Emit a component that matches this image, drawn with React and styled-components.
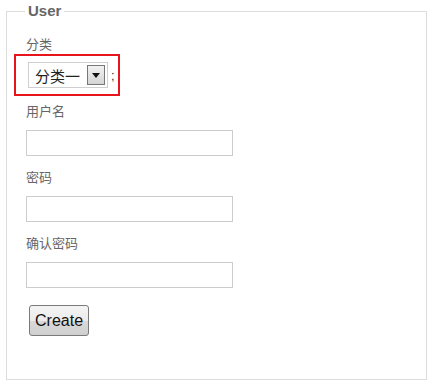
import styled, { createGlobalStyle } from 'styled-components';

const GlobalStyle = createGlobalStyle`
    body {
        margin: 0;
        background: #fff;
        font-family: "Liberation Sans", "Noto Sans CJK SC", sans-serif;
    }
`;

const Page = styled.div`
    padding: 0 0 0 6px;
`;

const Fieldset = styled.fieldset`
    box-sizing: border-box;
    width: 421px;
    height: 380px;
    margin: 0;
    padding: 12px 19px 0 19px;
    border: 1px solid #dcdcdc;
    min-width: 0;
`;

const Legend = styled.legend`
    padding: 0 3px;
    margin-left: -1px;
    font-family: "Liberation Sans", sans-serif;
    font-weight: bold;
    font-size: 15px;
    line-height: 22px;
    color: #666;
`;

const Label = styled.div`
    font-family: "Noto Sans CJK SC", sans-serif;
    font-size: 13px;
    line-height: 20px;
    color: #666;
    margin-bottom: ${p => (p.$tight ? '0' : '9px')};
`;

const Highlight = styled.div`
    box-sizing: border-box;
    width: 106px;
    height: 42px;
    margin-left: -12px;
    border: 2px solid #e8141c;
    display: flex;
    align-items: center;
    padding-left: 12px;
    margin-bottom: 5px;
`;

const Select = styled.div`
    box-sizing: border-box;
    height: 26px;
    width: 80px;
    border: 1px solid #cfcfcf;
    display: flex;
    align-items: center;
    justify-content: space-between;
    padding: 0 2px 0 6px;
    font-family: "Noto Sans CJK SC", sans-serif;
    font-size: 15px;
    color: #222;
`;

const Arrow = styled.span`
    box-sizing: border-box;
    width: 18px;
    height: 20px;
    border: 1px solid #777;
    background: linear-gradient(#f2f2f2, #d4d4d4);
    display: flex;
    align-items: center;
    justify-content: center;
`;

const Semi = styled.span`
    margin-left: 3px;
    font-size: 13px;
    color: #333;
`;

const Input = styled.input`
    display: block;
    box-sizing: border-box;
    width: 207px;
    height: 26px;
    border: 1px solid #cccccc;
    margin: 0 0 11px 0;
    padding: 0 4px;
    outline: none;
`;

const Button = styled.button`
    margin: 6px 0 0 3px;
    height: 31px;
    padding: 0 5px;
    border: 1px solid #7a7a7a;
    border-radius: 3px;
    background: linear-gradient(#f4f4f4 0%, #ebebeb 50%, #d9d9d9 51%, #cfcfcf 100%);
    font-family: "Liberation Sans", sans-serif;
    font-size: 16px;
    color: #111;
`;

const fields = ['用户名', '密码', '确认密码'];

const App = () => {
    return (
        <Page>
            <GlobalStyle />
            <Fieldset>
                <Legend>User</Legend>
                <Label $tight>分类</Label>
                <Highlight>
                    <Select>
                        <span>分类一</span>
                        <Arrow>
                            <svg width="8" height="5" viewBox="0 0 8 5">
                                <path d="M0 0h8L4 5z" fill="#111" />
                            </svg>
                        </Arrow>
                    </Select>
                    <Semi>;</Semi>
                </Highlight>
                {fields.map(name => (
                    <div key={name}>
                        <Label>{name}</Label>
                        <Input type={name.includes('密码') ? 'password' : 'text'} />
                    </div>
                ))}
                <Button>Create</Button>
            </Fieldset>
        </Page>
    );
};

export default App;
